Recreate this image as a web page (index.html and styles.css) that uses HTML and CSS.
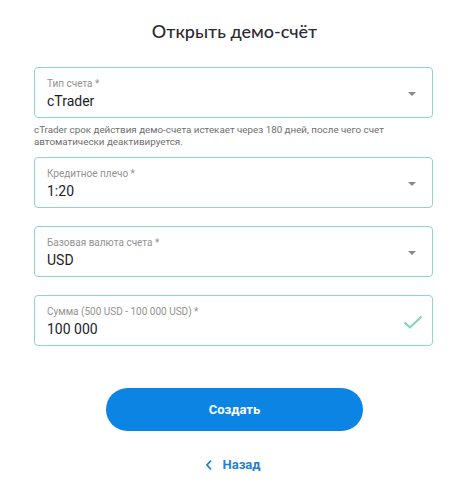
FILE: index.html
```html
<!DOCTYPE html>
<html lang="ru">
<head>
<meta charset="utf-8">
<link rel="stylesheet" href="styles.css">
</head>
<body>
<main class="page">
  <h1 class="title">Открыть демо-счёт</h1>
  <form class="form">
    <div class="group">
      <div class="field">
        <div class="field-text">
          <span class="label">Тип счета *</span>
          <span class="value">cTrader</span>
        </div>
        <span class="caret"></span>
      </div>
      <p class="hint">cTrader срок действия демо-счета истекает через 180 дней, после чего счет автоматически деактивируется.</p>
    </div>
    <div class="field">
      <div class="field-text">
        <span class="label">Кредитное плечо *</span>
        <span class="value">1:20</span>
      </div>
      <span class="caret"></span>
    </div>
    <div class="field">
      <div class="field-text">
        <span class="label">Базовая валюта счета *</span>
        <span class="value">USD</span>
      </div>
      <span class="caret"></span>
    </div>
    <div class="field">
      <div class="field-text">
        <span class="label">Сумма (500 USD - 100 000 USD) *</span>
        <span class="value">100 000</span>
      </div>
      <svg class="check" width="20" height="14" viewBox="0 0 20 14"><path d="M1.5 7.5 L7 12.5 L18.5 1.5" fill="none" stroke="#7fd2c0" stroke-width="2"/></svg>
    </div>
  </form>
  <button class="submit" type="button">Создать</button>
  <a class="back" href="#">
    <svg width="8" height="12" viewBox="0 0 8 12"><path d="M6 1.5 L2 6 L6 10.5" fill="none" stroke="#1f7fd3" stroke-width="1.8"/></svg>
    <span>Назад</span>
  </a>
</main>
</body>
</html>
```
FILE: styles.css
```css
* { box-sizing: border-box; }
html, body { margin: 0; padding: 0; background: #fff; }
body { font-family: Roboto, "Liberation Sans", sans-serif; color: #222; }
.page {
  width: 469px;
  display: flex;
  flex-direction: column;
  align-items: center;
  padding-top: 18px;
}
.title {
  margin: 0;
  font-family: Lato, "Noto Sans", sans-serif;
  font-weight: 500;
  font-size: 18px;
  line-height: 26px;
  color: #2b2b35;
}
.form {
  margin-top: 23px;
  width: 399px;
  margin-left: -2px;
  display: flex;
  flex-direction: column;
  gap: 18px;
}
.group { display: flex; flex-direction: column; margin-bottom: -18px; }
.field {
  height: 51px;
  border: 1px solid #8dd6c8;
  border-radius: 4px;
  display: flex;
  align-items: center;
  justify-content: space-between;
  padding: 0 16px 0 12px;
}
.field-text { display: flex; flex-direction: column; padding-top: 2px; }
.label {
  font-size: 10px;
  line-height: 13px;
  color: #929292;
}
.value {
  font-size: 14px;
  line-height: 20px;
  color: #1d1d1d;
  margin-top: 1px;
}
.caret {
  width: 0; height: 0;
  border-left: 4px solid transparent;
  border-right: 4px solid transparent;
  border-top: 4px solid #8a8a8a;
  margin-top: 2px;
}
.check { margin-right: -7px; margin-top: 2px; }
.hint {
  margin: 6px 0 9px;
  font-size: 9.8px;
  line-height: 12px;
  color: #6e6e6e;
}
.submit {
  margin-top: 42px;
  width: 257px;
  height: 43px;
  border: 0;
  border-radius: 22px;
  background: #0b84e3;
  color: #fff;
  font-family: Roboto, "Liberation Sans", sans-serif;
  font-weight: 700;
  font-size: 13px;
}
.back {
  margin-top: 26px;
  display: flex;
  align-items: center;
  gap: 10px;
  text-decoration: none;
  color: #1f7fd3;
  font-weight: 700;
  font-size: 13px;
  margin-left: -4px;
}
```
